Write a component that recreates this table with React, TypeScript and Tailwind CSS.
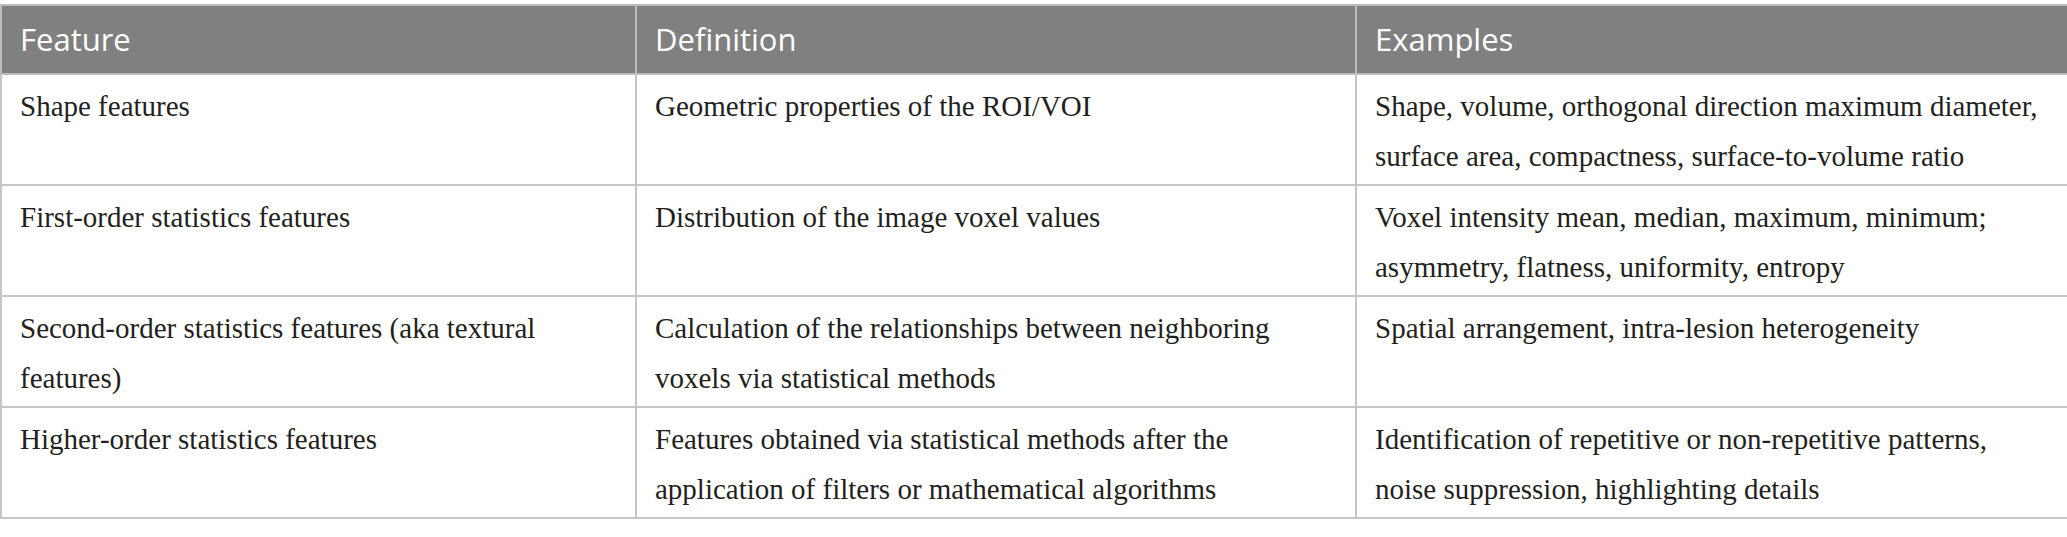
import React from 'react';

const rows: [string, string, string][] = [
  [
    'Shape features',
    'Geometric properties of the ROI/VOI',
    'Shape, volume, orthogonal direction maximum diameter, surface area, compactness, surface-to-volume ratio',
  ],
  [
    'First-order statistics features',
    'Distribution of the image voxel values',
    'Voxel intensity mean, median, maximum, minimum; asymmetry, flatness, uniformity, entropy',
  ],
  [
    'Second-order statistics features (aka textural features)',
    'Calculation of the relationships between neighboring voxels via statistical methods',
    'Spatial arrangement, intra-lesion heterogeneity',
  ],
  [
    'Higher-order statistics features',
    'Features obtained via statistical methods after the application of filters or mathematical algorithms',
    'Identification of repetitive or non-repetitive patterns, noise suppression, highlighting details',
  ],
];

const App: React.FC = () => {
  return (
    <div className="w-[2067px] bg-white pt-[4px]">
      <table className="w-[2067px] table-fixed border-collapse">
        <colgroup>
          <col className="w-[635px]" />
          <col className="w-[720px]" />
          <col className="w-[712px]" />
        </colgroup>
        <thead>
          <tr className="h-[69px] bg-[#808080]">
            {['Feature', 'Definition', 'Examples'].map((h) => (
              <th
                key={h}
                className="border-2 border-[#bdbdbd] px-[18px] text-left align-middle font-['Open_Sans',sans-serif] text-[31px] font-normal text-white"
              >
                {h}
              </th>
            ))}
          </tr>
        </thead>
        <tbody>
          {rows.map((r, i) => (
            <tr key={i}>
              {r.map((c, j) => (
                <td
                  key={j}
                  className="h-[111px] border-2 border-[#c6c6c6] px-[18px] pt-[6px] pb-[2px] align-top font-['Liberation_Serif',serif] text-[29px] leading-[50px] text-[#231f20]"
                >
                  {c}
                </td>
              ))}
            </tr>
          ))}
        </tbody>
      </table>
    </div>
  );
};

export default App;
